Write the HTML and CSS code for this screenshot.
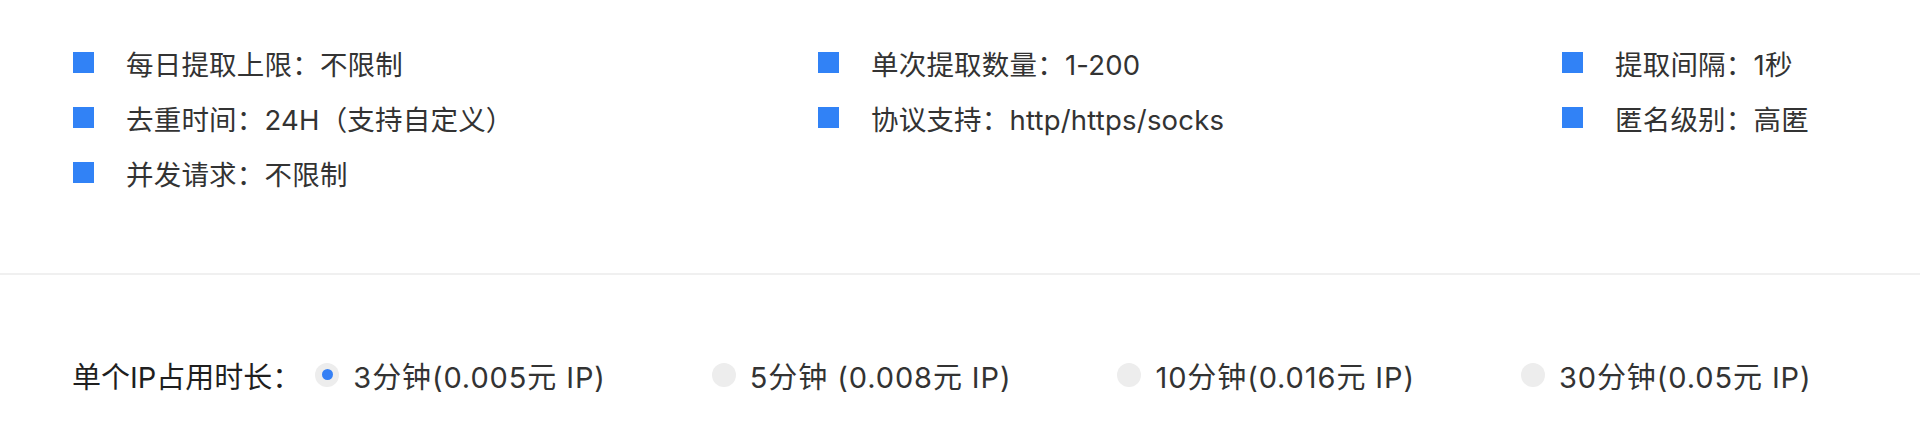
FILE: index.html
```html
<!DOCTYPE html>
<html lang="zh-CN">
<head>
<meta charset="utf-8">
<title>IP 套餐</title>
<link rel="stylesheet" href="styles.css">
</head>
<body>
<section class="features">
  <div class="feature"><span class="square"></span><span class="feature-text">每日提取上限：不限制</span></div>
  <div class="feature"><span class="square"></span><span class="feature-text">单次提取数量：1-200</span></div>
  <div class="feature"><span class="square"></span><span class="feature-text">提取间隔：1秒</span></div>
  <div class="feature"><span class="square"></span><span class="feature-text">去重时间：24H（支持自定义）</span></div>
  <div class="feature"><span class="square"></span><span class="feature-text">协议支持：http/https/socks</span></div>
  <div class="feature"><span class="square"></span><span class="feature-text">匿名级别：高匿</span></div>
  <div class="feature"><span class="square"></span><span class="feature-text">并发请求：不限制</span></div>
</section>
<div class="divider"></div>
<section class="duration">
  <span class="duration-label">单个IP占用时长：</span>
  <label class="option"><span class="radio checked"></span><span class="option-text">3分钟(0.005元 IP)</span></label>
  <label class="option"><span class="radio"></span><span class="option-text">5分钟 (0.008元 IP)</span></label>
  <label class="option"><span class="radio"></span><span class="option-text">10分钟(0.016元 IP)</span></label>
  <label class="option"><span class="radio"></span><span class="option-text">30分钟(0.05元 IP)</span></label>
</section>
</body>
</html>
```
FILE: styles.css
```css
html, body {
  margin: 0;
  padding: 0;
  background: #ffffff;
}
body {
  width: 1920px;
  height: 428px;
  overflow: hidden;
  font-family: Inter, "Noto Sans CJK SC", sans-serif;
  color: #333333;
}
.features {
  display: grid;
  grid-template-columns: 745px 744px 1fr;
  grid-auto-rows: 55px;
  padding: 35px 0 73px 73px;
}
.feature {
  display: flex;
  align-items: center;
  font-size: 27.5px;
}
.feature-text {
  letter-spacing: 0.2px;
}
.square {
  width: 21px;
  height: 21px;
  background: #3182f6;
  margin-right: 32px;
  flex: none;
}
.divider {
  height: 2px;
  background: #f0f0f0;
}
.duration {
  display: flex;
  align-items: center;
  height: 55px;
  padding: 72px 0 0 72px;
  font-size: 29px;
}
.duration-label {
  color: #1f1f1f;
  margin-right: 14px;
}
.option {
  display: flex;
  align-items: center;
  margin-right: 106px;
}
.radio {
  width: 24px;
  height: 24px;
  border-radius: 50%;
  background: #ededed;
  margin-right: 14px;
  display: flex;
  align-items: center;
  justify-content: center;
  flex: none;
}
.radio.checked::after {
  content: "";
  width: 11px;
  height: 11px;
  border-radius: 50%;
  background: #3580f5;
}
.option-text {
  color: #333333;
  letter-spacing: 0.9px;
}
```
